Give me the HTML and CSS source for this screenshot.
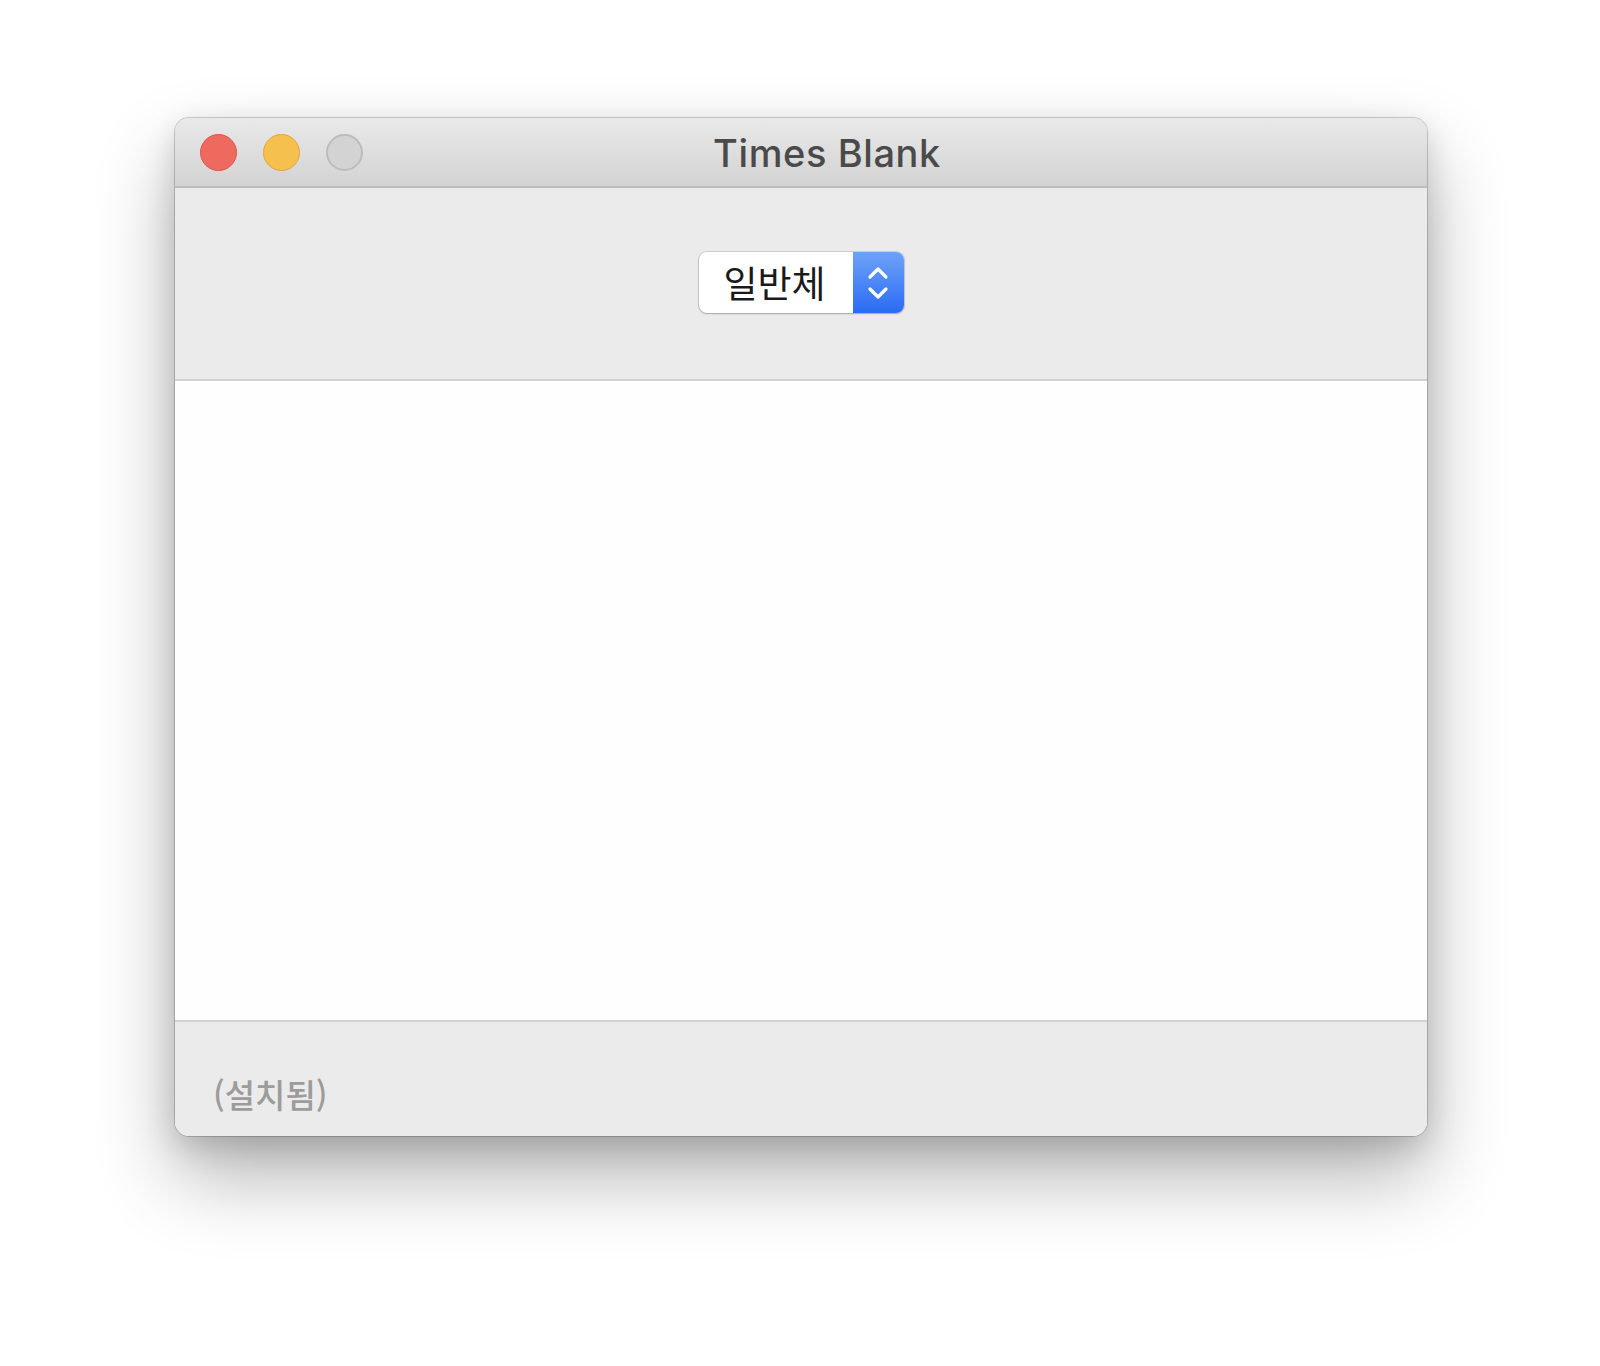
FILE: index.html
```html
<!DOCTYPE html>
<html lang="ko">
<head>
<meta charset="utf-8">
<title>Times Blank</title>
<link rel="stylesheet" href="styles.css">
</head>
<body>
<div class="stage">
  <div class="window">
    <div class="titlebar">
      <div class="lights">
        <span class="light red"></span>
        <span class="light yellow"></span>
        <span class="light gray"></span>
      </div>
      <div class="title">Times Blank</div>
    </div>
    <div class="toolbar">
      <div class="popup">
        <span class="popup-label">일반체</span>
        <span class="popup-arrows">
          <svg width="26" height="40" viewBox="0 0 26 40">
            <path d="M5 14 L13 6 L21 14" fill="none" stroke="#fff" stroke-width="3.2" stroke-linecap="round" stroke-linejoin="round"/>
            <path d="M5 26 L13 34 L21 26" fill="none" stroke="#fff" stroke-width="3.2" stroke-linecap="round" stroke-linejoin="round"/>
          </svg>
        </span>
      </div>
    </div>
    <div class="content"></div>
    <div class="footer">
      <span class="status">(설치됨)</span>
    </div>
  </div>
</div>
</body>
</html>
```
FILE: styles.css
```css
html, body {
  margin: 0;
  padding: 0;
  background: #ffffff;
}
body {
  width: 1600px;
  height: 1366px;
  overflow: hidden;
  font-family: "Noto Sans", "Noto Sans CJK KR", sans-serif;
}
.stage {
  padding-top: 118px;
  padding-left: 175px;
}
.window {
  width: 1252px;
  height: 1018px;
  border-radius: 14px;
  overflow: hidden;
  display: flex;
  flex-direction: column;
  background: #ececec;
  box-shadow: 0 0 0 1px rgba(0,0,0,0.18), 0 40px 80px rgba(0,0,0,0.30), 0 10px 30px rgba(0,0,0,0.15);
}
.titlebar {
  height: 68px;
  flex: none;
  position: relative;
  background: linear-gradient(#e9e9e9, #d3d3d3);
  border-bottom: 2px solid #bdbdbd;
  display: flex;
  align-items: center;
  justify-content: center;
}
.lights {
  position: absolute;
  left: 25px;
  top: 16px;
  display: flex;
  gap: 26px;
}
.light {
  width: 37px;
  height: 37px;
  border-radius: 50%;
  box-sizing: border-box;
  display: block;
}
.red { background: #ee6a5f; border: 1px solid #d8564c; }
.yellow { background: #f6c04f; border: 1px solid #dea73c; }
.gray { background: #d3d3d3; border: 2px solid #bcbcbc; }
.title {
  font-family: "Inter", "Liberation Sans", sans-serif;
  font-size: 38px;
  font-weight: 500;
  color: #4a4a4a;
  margin-left: 52px;
  margin-top: 2px;
  letter-spacing: 0.6px;
}
.toolbar {
  height: 193px;
  flex: none;
  background: #ebebeb;
  border-bottom: 2px solid #d2d2d2;
  display: flex;
  justify-content: center;
  padding-top: 64px;
  box-sizing: border-box;
}
.popup {
  width: 205px;
  height: 61px;
  display: flex;
  border-radius: 8px;
  overflow: hidden;
  background: #fff;
  box-shadow: 0 0 0 1px rgba(0,0,0,0.12), 0 1px 2px rgba(0,0,0,0.2);
}
.popup-label {
  flex: 1;
  display: flex;
  align-items: center;
  padding-left: 25px;
  font-family: "Noto Sans CJK KR", sans-serif;
  font-size: 37px;
  font-weight: 400;
  color: #1a1a1a;
  line-height: 1;
}
.popup-arrows {
  width: 51px;
  flex: none;
  background: linear-gradient(#6ea3f8, #2a6bf5);
  display: flex;
  align-items: center;
  justify-content: center;
}
.content {
  flex: 1;
  background: #fefefe;
  border-bottom: 2px solid #d2d2d2;
}
.footer {
  height: 114px;
  flex: none;
  background: #ebebeb;
  padding-left: 38px;
  padding-top: 56px;
  box-sizing: border-box;
}
.status {
  font-family: "Noto Sans CJK KR", sans-serif;
  font-size: 33px;
  font-weight: 500;
  color: #9c9c9c;
  line-height: 1;
}
```
